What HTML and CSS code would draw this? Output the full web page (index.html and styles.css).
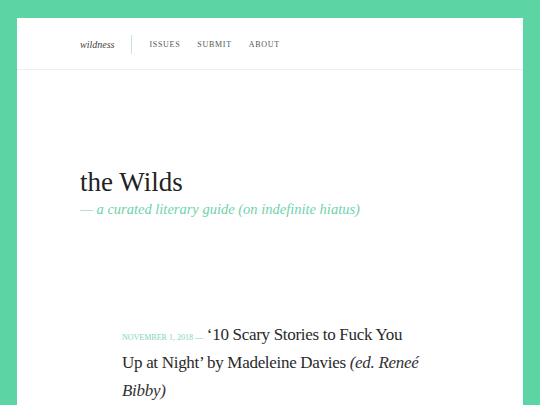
FILE: index.html
```html
<!DOCTYPE html>
<html>
<head>
<meta charset="utf-8">
<link rel="stylesheet" href="styles.css">
</head>
<body>
<div class="frame">
  <header class="site-header">
    <a class="brand">wildness</a>
    <nav class="nav">
      <a>Issues</a>
      <a>Submit</a>
      <a>About</a>
    </nav>
  </header>
  <section class="hero">
    <h1 class="title">the Wilds</h1>
    <p class="tagline">— a curated literary guide (on indefinite hiatus)</p>
  </section>
  <section class="posts">
    <p class="post"><span class="date">November 1, 2018 —</span> ‘10 Scary Stories to Fuck You Up at Night’ by Madeleine Davies <em>(ed. Reneé Bibby)</em></p>
  </section>
</div>
</body>
</html>
```
FILE: styles.css
```css
html, body { margin: 0; padding: 0; }
body {
  background: #5dd4a3;
  padding: 18px 17px 0 17px;
  font-family: "Liberation Serif", "DejaVu Serif", serif;
  color: #2a2a2a;
  height: 405px;
  box-sizing: border-box;
  overflow: hidden;
}
.frame {
  background: #fff;
  height: 100%;
}
.site-header {
  display: flex;
  align-items: center;
  height: 52px;
  padding: 2px 0 0 63px;
  border-bottom: 1px solid #eef0ef;
  box-sizing: border-box;
}
.brand {
  font-style: italic;
  font-size: 10px;
  color: #444;
  padding-right: 17px;
  border-right: 1px solid #bfe9d8;
  line-height: 19px;
}
.nav {
  display: flex;
  gap: 17px;
  padding-left: 17px;
}
.nav a {
  text-transform: uppercase;
  font-size: 8px;
  letter-spacing: 0.7px;
  color: #555;
}
.hero {
  padding: 96px 0 0 63px;
}
.title {
  margin: 0;
  font-weight: normal;
  font-size: 27px;
  line-height: 32px;
  color: #222;
}
.tagline {
  margin: 3px 0 0;
  font-style: italic;
  font-size: 14.5px;
  color: #6fd2ad;
}
.posts {
  padding: 103px 0 0 105px;
  width: 297px;
}
.post {
  margin: 0;
  font-size: 17px;
  line-height: 28px;
  letter-spacing: -0.3px;
  color: #2a2a2a;
}
.date {
  text-transform: uppercase;
  font-size: 8px;
  line-height: 1;
  color: #7fd6b4;
  letter-spacing: 0;
}
.post em { color: #333; }
```
